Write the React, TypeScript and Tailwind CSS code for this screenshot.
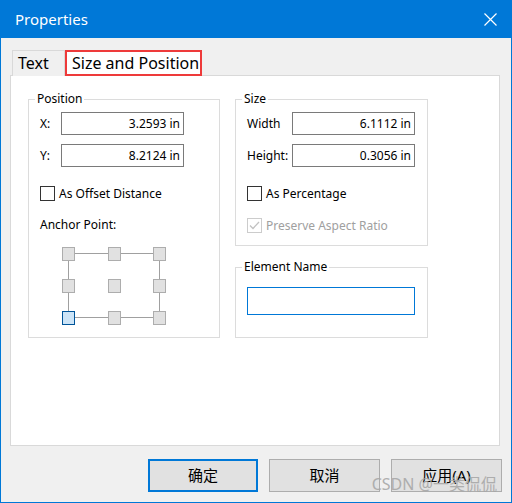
import React from "react";

const font = { fontFamily: '"Noto Sans", "Noto Sans CJK SC", sans-serif' };

function Checkbox({ checked = false, disabled = false }: { checked?: boolean; disabled?: boolean }) {
  return (
    <span
      className={`flex h-[15px] w-[15px] items-center justify-center border bg-white ${
        disabled ? "border-[#cccccc]" : "border-[#333333]"
      }`}
    >
      {checked && (
        <svg width="11" height="9" viewBox="0 0 11 9">
          <path d="M1 4.5 L4 7.5 L10 1" fill="none" stroke="#c2c2c2" strokeWidth="1.3" />
        </svg>
      )}
    </span>
  );
}

function NumberField({ value }: { value: string }) {
  return (
    <div className="flex h-[23px] w-[123px] items-center justify-end border border-[#7a7a7a] bg-white pr-[3px] text-[12px] text-black">
      {value}
    </div>
  );
}

function AnchorGrid() {
  const cols = [0, 46, 91];
  const rows = [0, 32, 64];
  return (
    <svg width="104" height="79" viewBox="0 0 104 79">
      <g stroke="#a0a0a0" strokeWidth="1">
        <line x1="12" y1="6.5" x2="46" y2="6.5" />
        <line x1="58" y1="6.5" x2="91" y2="6.5" />
        <line x1="12" y1="70.5" x2="46" y2="70.5" />
        <line x1="58" y1="70.5" x2="91" y2="70.5" />
        <line x1="6.5" y1="14" x2="6.5" y2="32" />
        <line x1="6.5" y1="46" x2="6.5" y2="64" />
        <line x1="97.5" y1="14" x2="97.5" y2="32" />
        <line x1="97.5" y1="46" x2="97.5" y2="64" />
      </g>
      {rows.map((y, ri) =>
        cols.map((x, ci) => {
          const selected = ri === 2 && ci === 0;
          return (
            <rect
              key={`${ri}-${ci}`}
              x={x + 0.5}
              y={y + 0.5}
              width="12"
              height="13"
              fill={selected ? "#cce4f7" : "#e1e1e1"}
              stroke={selected ? "#005499" : "#adadad"}
              strokeWidth="1"
            />
          );
        })
      )}
    </svg>
  );
}

export default function App() {
  return (
    <div
      className="relative flex h-[503px] w-[512px] flex-col border-x border-b border-[#0078d7] bg-[#f0f0f0]"
      style={font}
    >
      {/* Title bar */}
      <div className="-mx-[1px] flex h-[38px] items-center justify-between bg-[#0078d7] pl-[15px] pr-[15px] text-white">
        <span className="text-[15px]">Properties</span>
        <svg width="13" height="13" viewBox="0 0 13 13">
          <path d="M0.5 0.5 L12.5 12.5 M12.5 0.5 L0.5 12.5" stroke="#ffffff" strokeWidth="1.2" />
        </svg>
      </div>

      <div className="pt-[12px]">
        {/* Tabs */}
        <div className="ml-[11px] flex h-[26px] items-end">
          <div className="flex h-[26px] w-[53px] items-end border border-b-0 border-[#d9d9d9] bg-[#f0f0f0] pb-[1px] pl-[5px] text-[16px] text-black">
            Text
          </div>
          <div className="relative z-10 flex h-[26px] w-[137px] items-center border-2 border-[#ee3a3a] bg-white pl-[5px] text-[16px] text-black">
            Size and Position
          </div>
        </div>

        {/* Panel */}
        <div className="-mt-[1px] ml-[9px] flex h-[371px] w-[490px] gap-[15px] border border-[#d9d9d9] bg-white pl-[17px] pt-[15px] text-[12px] text-black">
          {/* Position */}
          <fieldset className="h-[247px] w-[192px] border border-[#dcdcdc] pl-[11px] pt-[5px]">
            <legend className="-ml-[5px] px-[2px] leading-[16px]">Position</legend>
            <div className="flex h-[23px] items-center">
              <span className="w-[21px]">X:</span>
              <NumberField value="3.2593 in" />
            </div>
            <div className="mt-[9px] flex h-[23px] items-center">
              <span className="w-[21px]">Y:</span>
              <NumberField value="8.2124 in" />
            </div>
            <div className="mt-[19px] flex h-[15px] items-center gap-[4px]">
              <Checkbox />
              <span className="leading-[15px]">As Offset Distance</span>
            </div>
            <div className="mt-[16px] leading-[16px]">Anchor Point:</div>
            <div className="ml-[22px] mt-[14px] h-[79px]">
              <AnchorGrid />
            </div>
          </fieldset>

          <div className="flex flex-col gap-[13px]">
            {/* Size */}
            <fieldset className="h-[155px] w-[193px] border border-[#dcdcdc] pl-[11px] pt-[5px]">
              <legend className="-ml-[5px] px-[2px] leading-[16px]">Size</legend>
              <div className="flex h-[23px] items-center">
                <span className="w-[45px]">Width</span>
                <NumberField value="6.1112 in" />
              </div>
              <div className="mt-[9px] flex h-[23px] items-center">
                <span className="w-[45px]">Height:</span>
                <NumberField value="0.3056 in" />
              </div>
              <div className="mt-[19px] flex h-[15px] items-center gap-[4px]">
                <Checkbox />
                <span className="leading-[15px]">As Percentage</span>
              </div>
              <div className="mt-[17px] flex h-[15px] items-center gap-[4px] text-[#a0a0a0]">
                <Checkbox checked disabled />
                <span className="leading-[15px]">Preserve Aspect Ratio</span>
              </div>
            </fieldset>

            {/* Element Name */}
            <fieldset className="h-[79px] w-[193px] border border-[#dcdcdc] pl-[11px] pt-[12px]">
              <legend className="-ml-[5px] px-[2px] leading-[16px]">Element Name</legend>
              <div className="h-[28px] w-[168px] border border-[#0078d7] bg-white" />
            </fieldset>
          </div>
        </div>

        {/* Buttons */}
        <div className="mt-[13px] flex justify-end gap-[11px] pr-[9px] text-[15px] text-black">
          <button className="h-[33px] w-[110px] border-2 border-[#0078d7] bg-[#e1e1e1]">确定</button>
          <button className="h-[33px] w-[111px] border border-[#adadad] bg-[#e1e1e1]">取消</button>
          <button className="h-[33px] w-[111px] border border-[#adadad] bg-[#e1e1e1]">应用(A)</button>
        </div>
      </div>

      {/* Watermark */}
      <div className="pointer-events-none absolute bottom-[6px] right-[14px] text-[16px] text-[#a8a8a8] opacity-90">
        CSDN @一类侃侃
      </div>
    </div>
  );
}
